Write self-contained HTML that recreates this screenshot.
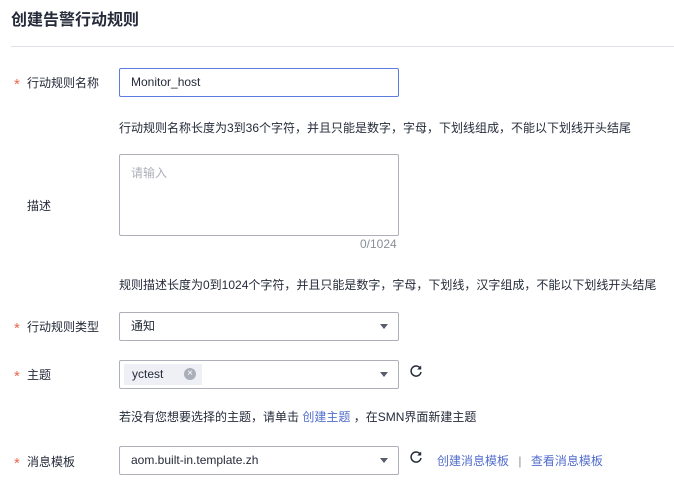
<!DOCTYPE html>
<html><head><meta charset="utf-8"><style>
*{box-sizing:border-box;margin:0;padding:0}
body{width:674px;height:486px;background:#fff;font-family:"Liberation Sans","Noto Sans CJK SC",sans-serif;font-size:12px;color:#252b3a;position:relative;overflow:hidden}
.a{position:absolute;white-space:nowrap}
.t{left:11px;top:6px;font-size:16px;font-weight:bold;color:#252b3a}
.hr{left:11px;top:46px;width:663px;height:1px;background:#dfe1e6}
.lab{left:14px;font-size:12px;color:#252b3a}
.lab b{color:#e8694f;font-weight:normal;display:inline-block;width:13px;font-size:15px;vertical-align:-2px}
.box{left:119px;width:280px;height:29px;border:1px solid #adb0b8;border-radius:2px;background:#fff;padding-left:11px;line-height:27px;font-size:12px}
.hint{left:119px;font-size:12px;color:#252b3a}
.car{position:absolute;right:10px;top:11px;width:0;height:0;border-left:4px solid transparent;border-right:4px solid transparent;border-top:5px solid #575d6c}
.lk{color:#526ecc}
.rf{width:14px;height:14px}
</style></head><body>
<div class="a t">创建告警行动规则</div>
<div class="a hr"></div>

<div class="a lab" style="top:74px"><b>*</b>行动规则名称</div>
<div class="a box" style="top:68px;border-color:#5e7ce0">Monitor_host</div>
<div class="a hint" style="top:119px">行动规则名称长度为3到36个字符，并且只能是数字，字母，下划线组成，不能以下划线开头结尾</div>

<div class="a lab" style="top:197px;left:27px">描述</div>
<div class="a box" style="top:154px;height:82px;line-height:normal;padding-top:9px;color:#adb0b8">请输入</div>
<div class="a" style="left:360px;top:237px;color:#8a8e99">0/1024</div>
<div class="a hint" style="top:276px">规则描述长度为0到1024个字符，并且只能是数字，字母，下划线，汉字组成，不能以下划线开头结尾</div>

<div class="a lab" style="top:318px"><b>*</b>行动规则类型</div>
<div class="a box" style="top:312px">通知<span class="car"></span></div>

<div class="a lab" style="top:366px"><b>*</b>主题</div>
<div class="a box" style="top:360px;padding-left:4px"><span style="display:inline-block;background:#eef0f5;height:21px;line-height:21px;margin-top:3px;vertical-align:top;padding:0 8px 0 8px;width:78px;position:relative">yctest<span style="position:absolute;left:60px;top:4px;width:12px;height:12px;border-radius:50%;background:#aaaeb8;color:#fff;font-size:10px;line-height:12px;text-align:center">×</span></span><span class="car"></span></div>
<svg class="a rf" style="left:409px;top:364px" viewBox="0 0 14 14"><path d="M11.2 4.2A5 5 0 1 0 12 8" fill="none" stroke="#252b3a" stroke-width="1.5"/><path d="M12.2 1.5v4h-4z" fill="#252b3a"/></svg>
<div class="a hint" style="top:408px">若没有您想要选择的主题，请单击 <span class="lk">创建主题</span> ，在SMN界面新建主题</div>

<div class="a lab" style="top:453px"><b>*</b>消息模板</div>
<div class="a box" style="top:446px">aom.built-in.template.zh<span class="car"></span></div>
<svg class="a rf" style="left:409px;top:450px" viewBox="0 0 14 14"><path d="M11.2 4.2A5 5 0 1 0 12 8" fill="none" stroke="#252b3a" stroke-width="1.5"/><path d="M12.2 1.5v4h-4z" fill="#252b3a"/></svg>
<div class="a" style="left:437px;top:452px"><span class="lk">创建消息模板</span> <span style="color:#8a8e99;margin:0 6px"> | </span> <span class="lk">查看消息模板</span></div>
</body></html>
